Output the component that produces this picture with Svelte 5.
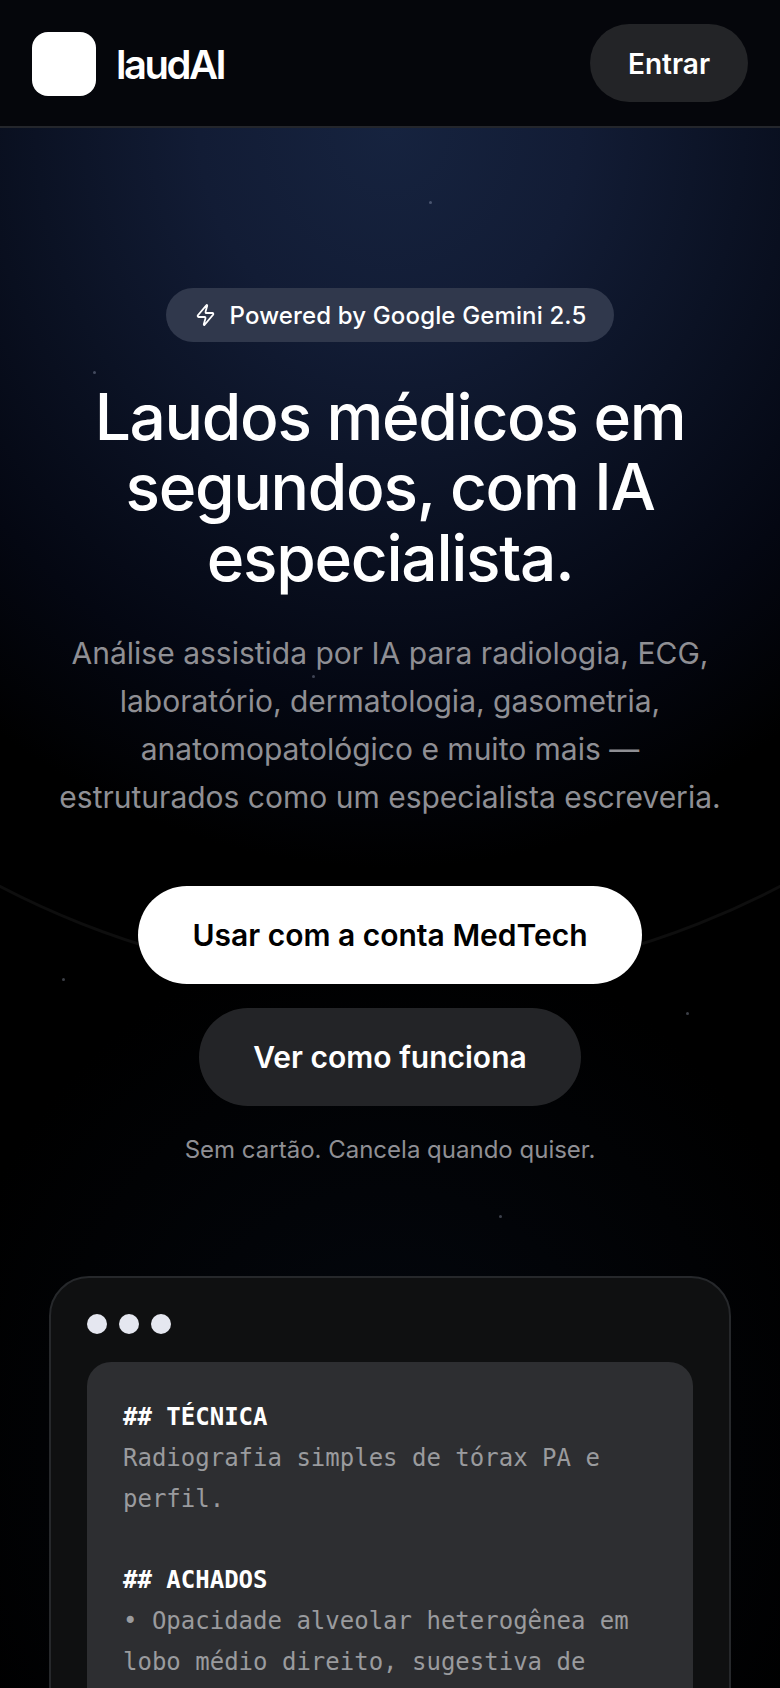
<script>
    const stars = [
        {x: 429, y: 201}, {x: 93, y: 371}, {x: 608, y: 303}, {x: 62, y: 978},
        {x: 686, y: 1012}, {x: 499, y: 1215}, {x: 218, y: 1350}, {x: 717, y: 1451},
        {x: 312, y: 675}
    ]
</script>

<div class="page">
    <div class="glow"></div>
    <div class="ring"></div>
    {#each stars as s}
        <span class="star" style="left:{s.x}px;top:{s.y}px"></span>
    {/each}

    <header class="topbar">
        <div class="brand">
            <div class="logo"></div>
            <span class="name">laudAI</span>
        </div>
        <button class="btn dark small">Entrar</button>
    </header>

    <main class="hero">
        <div class="badge">
            <svg width="21" height="24" viewBox="0 0 24 24" preserveAspectRatio="none" fill="none" stroke="currentColor" stroke-width="2" stroke-linecap="round" stroke-linejoin="round">
                <path d="M4 14a1 1 0 0 1-.78-1.63l9.9-10.2a.5.5 0 0 1 .86.46l-1.92 6.02A1 1 0 0 0 13 10h7a1 1 0 0 1 .78 1.63l-9.9 10.2a.5.5 0 0 1-.86-.46l1.92-6.02A1 1 0 0 0 11 14z"/>
            </svg>
            <span>Powered by Google Gemini 2.5</span>
        </div>
        <h1>Laudos médicos em segundos, com IA especialista.</h1>
        <p class="lead">Análise assistida por IA para radiologia, ECG, laboratório, dermatologia, gasometria, anatomopatológico e muito mais — estruturados como um especialista escreveria.</p>
        <div class="actions">
            <button class="btn light">Usar com a conta MedTech</button>
            <button class="btn dark">Ver como funciona</button>
        </div>
        <p class="note">Sem cartão. Cancela quando quiser.</p>
    </main>

    <section class="card">
        <div class="dots"><i></i><i></i><i></i></div>
        <div class="report">
            <b>## TÉCNICA</b>
            <span>Radiografia simples de tórax PA e perfil.</span>
            <span class="gap"></span>
            <b>## ACHADOS</b>
            <span>• Opacidade alveolar heterogênea em lobo médio direito, sugestiva de</span>
        </div>
    </section>
</div>

<style>
    :global(body) {
        background: #000;
    }

    .page {
        position: relative;
        width: 780px;
        height: 1688px;
        overflow: hidden;
        background: #000;
        color: #fff;
        font-family: Inter, "Liberation Sans", sans-serif;
    }

    .glow {
        position: absolute;
        inset: 0;
        background:
            radial-gradient(ellipse 680px 740px at 390px 128px, #16233f 0%, #121c35 28%, #0b1224 52%, #040712 78%, #000 100%),
            radial-gradient(ellipse 460px 520px at 390px 1450px, #040810 0%, #000 100%);
        background-size: 100% 868px, 100% 100%;
        background-repeat: no-repeat;
    }

    .ring {
        position: absolute;
        left: -450px;
        top: -696px;
        width: 1680px;
        height: 1680px;
        box-sizing: border-box;
        border: 3px solid rgba(255, 255, 255, 0.055);
        border-radius: 50%;
    }

    .star {
        position: absolute;
        width: 3px;
        height: 3px;
        border-radius: 50%;
        background: rgba(200, 210, 235, 0.3);
    }

    .topbar {
        position: relative;
        display: flex;
        align-items: center;
        justify-content: space-between;
        box-sizing: border-box;
        height: 128px;
        padding: 2px 32px 0;
        background: #05060b;
        border-bottom: 2px solid #24262c;
    }

    .brand {
        display: flex;
        align-items: center;
        gap: 20px;
    }

    .logo {
        width: 64px;
        height: 64px;
        border-radius: 16px;
        background: #fff;
    }

    .name {
        font-size: 40px;
        font-weight: 600;
        letter-spacing: -2.5px;
    }

    .btn {
        border: none;
        border-radius: 999px;
        font-family: inherit;
        font-size: 30px;
        font-weight: 600;
        height: 98px;
        padding: 0 54px;
    }

    .btn.light {
        background: #fff;
        color: #000;
    }

    .btn.dark {
        background: #232427;
        color: #fff;
    }

    .btn.small {
        width: 158px;
        height: 78px;
        margin-bottom: 2px;
        padding: 2px 0 0;
        font-size: 28px;
    }

    .hero {
        position: relative;
        display: flex;
        flex-direction: column;
        align-items: center;
        padding: 160px 48px 0;
        text-align: center;
    }

    .badge {
        display: flex;
        align-items: center;
        gap: 12px;
        height: 54px;
        padding: 0 28px;
        border-radius: 999px;
        background: #30384c;
        font-size: 24px;
        font-weight: 500;
        letter-spacing: 0.006em;
    }

    .badge svg {
        margin: 0 1.5px;
    }

    h1 {
        margin: 40px 0 0;
        font-size: 64px;
        line-height: 70.4px;
        font-weight: 500;
        letter-spacing: -0.02em;
    }

    .lead {
        margin: 36px 0 0;
        font-size: 30px;
        line-height: 48px;
        color: #8f8f94;
    }

    .actions {
        display: flex;
        flex-direction: column;
        align-items: center;
        gap: 24px;
        margin-top: 65px;
    }

    .note {
        margin: 26px 0 0;
        font-size: 24px;
        line-height: 36px;
        color: #8f8f94;
    }

    .card {
        position: relative;
        box-sizing: border-box;
        width: 682px;
        height: 800px;
        margin: 108px auto 0;
        padding: 36px;
        background: #0f1011;
        border: 2px solid #26282b;
        border-radius: 40px;
    }

    .dots {
        display: flex;
        gap: 12px;
        margin-bottom: 28px;
    }

    .dots i {
        width: 20px;
        height: 20px;
        border-radius: 50%;
        background: #e5e7f0;
    }

    .report {
        display: flex;
        flex-direction: column;
        height: 600px;
        padding: 35px 36px;
        border-radius: 24px;
        background: #2d2e31;
        font-family: "DejaVu Sans Mono", monospace;
        font-size: 24px;
        line-height: 40.8px;
        color: #9a9b9e;
    }

    .report b {
        color: #fff;
        font-weight: 700;
    }

    .gap {
        height: 40.8px;
    }
</style>
